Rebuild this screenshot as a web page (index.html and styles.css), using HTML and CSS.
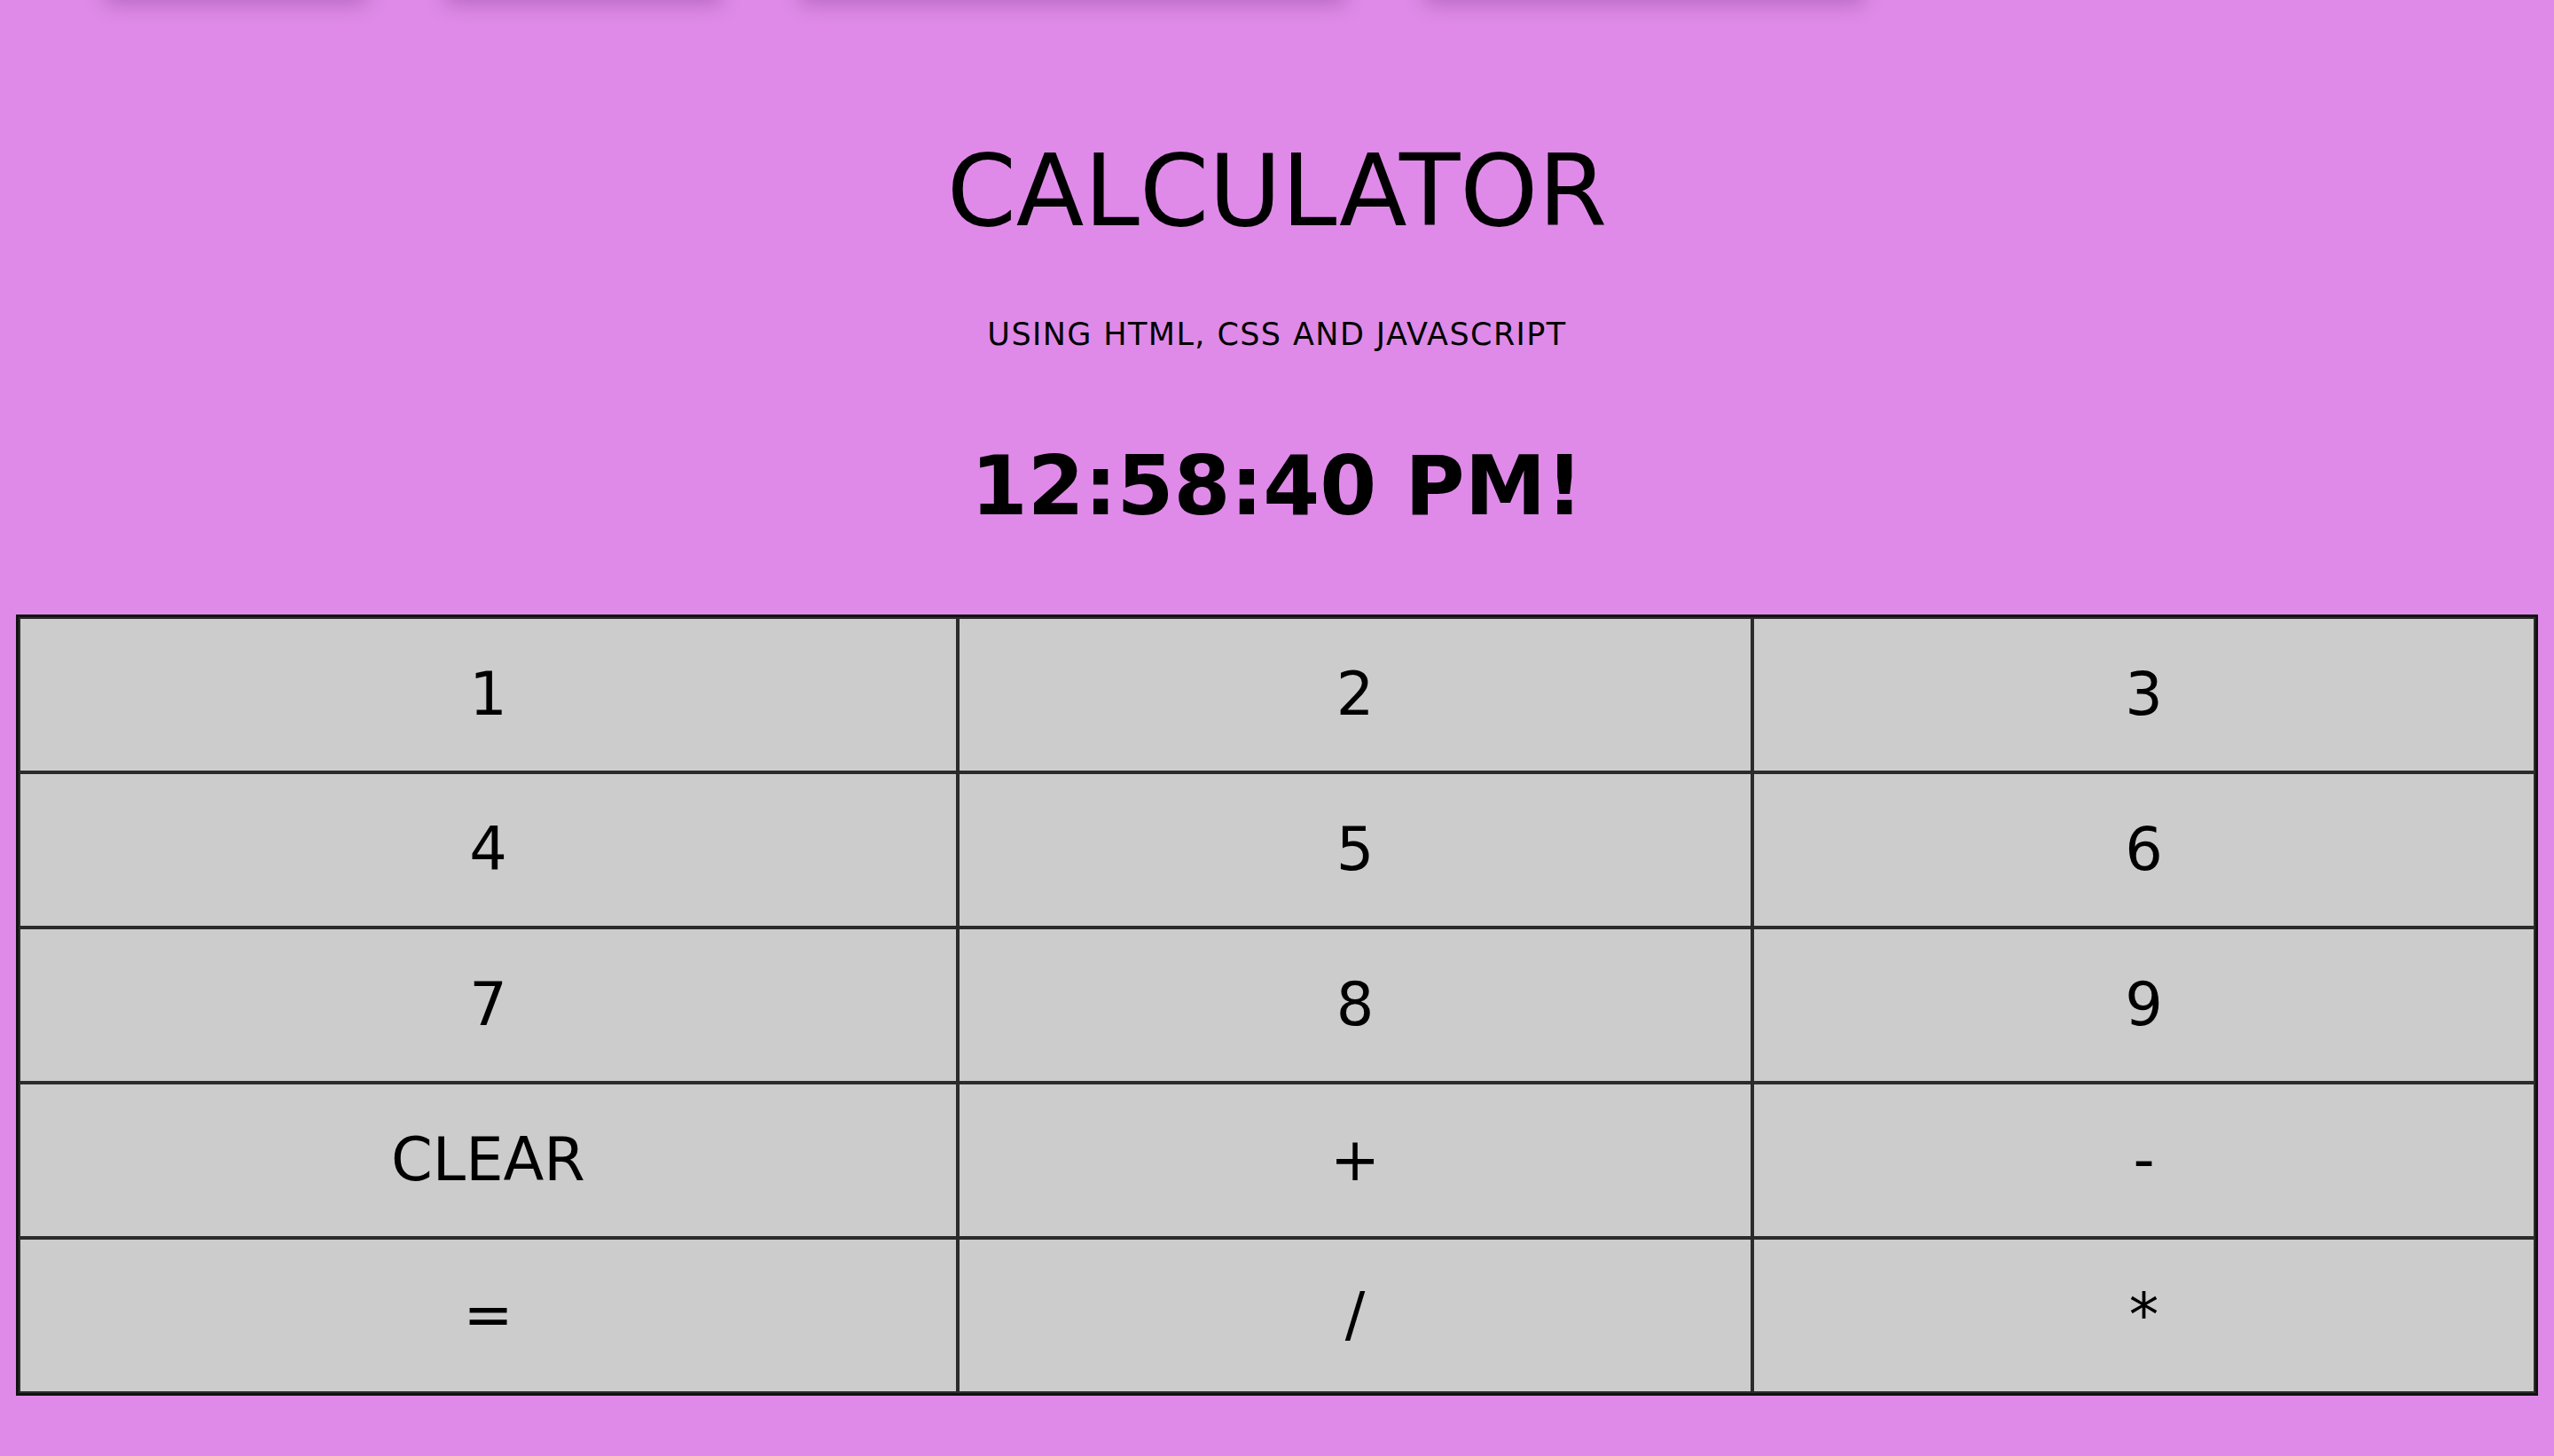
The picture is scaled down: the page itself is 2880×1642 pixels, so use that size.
FILE: index.html
```html
<!DOCTYPE html>
<html lang="en">
<head>
<meta charset="utf-8">
<title>Calculator</title>
<link rel="stylesheet" href="styles.css">
</head>
<body>
<nav class="topnav">
  <div class="navitem n1"></div>
  <div class="navitem n2"></div>
  <div class="navitem n3"></div>
  <div class="navitem n4"></div>
</nav>
<header class="head">
  <h1 class="title">CALCULATOR</h1>
  <p class="subtitle">USING HTML, CSS AND JAVASCRIPT</p>
  <h2 class="clock">12:58:40 PM!</h2>
</header>
<table class="calc">
  <colgroup>
    <col class="col1">
    <col class="col2">
    <col class="col3">
  </colgroup>
  <tbody>
    <tr><td>1</td><td>2</td><td>3</td></tr>
    <tr><td>4</td><td>5</td><td>6</td></tr>
    <tr><td>7</td><td>8</td><td>9</td></tr>
    <tr><td>CLEAR</td><td>+</td><td>-</td></tr>
    <tr><td>=</td><td>/</td><td>*</td></tr>
  </tbody>
</table>
</body>
</html>
```
FILE: styles.css
```css
html, body {
  margin: 0;
  padding: 0;
}
body {
  background: #df8ae8;
  font-family: "DejaVu Sans", Verdana, sans-serif;
  color: #000;
  overflow: hidden;
}
.topnav {
  display: flex;
  height: 60px;
  margin-top: -60px;
  padding-left: 118px;
  gap: 88px;
}
.navitem {
  height: 60px;
  background: #df8ae8;
  box-shadow: 0 6px 22px rgba(60, 0, 70, 0.22);
}
.n1 { width: 296px; }
.n2 { width: 312px; }
.n3 { width: 616px; }
.n4 { width: 496px; }
.head {
  text-align: center;
  padding-top: 148px;
}
.title {
  margin: 0;
  font-size: 112px;
  font-weight: normal;
  line-height: 1.2;
}
.subtitle {
  margin: 74px 0 0;
  font-size: 35px;
  letter-spacing: 1.4px;
  line-height: 1.2;
}
.clock {
  margin: 96px 0 0;
  font-size: 92px;
  font-weight: bold;
  line-height: 1.2;
}
.calc {
  margin: 88px 0 0 18px;
  width: 2844px;
  table-layout: fixed;
  border-collapse: separate;
  border-spacing: 0;
  border: 3px solid #111;
}
.col1 { width: 1059px; }
.col2 { width: 896px; }
.col3 { width: 883px; }
.calc td {
  box-sizing: border-box;
  height: 175px;
  padding: 0;
  border: 2px solid #2b2b2b;
  background: #cccccc;
  text-align: center;
  vertical-align: middle;
  font-size: 67px;
}
```
